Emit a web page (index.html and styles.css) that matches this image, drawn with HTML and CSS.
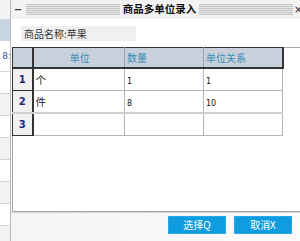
FILE: index.html
```html
<!DOCTYPE html>
<html>
<head>
<meta charset="utf-8">
<link rel="stylesheet" href="styles.css">
</head>
<body>
<div class="app">
  <div class="app-top"></div>
  <div class="app-band"></div>
  <div class="app-row app-first"><span class="app-num">8:</span></div>
  <div class="app-row"></div>
  <div class="app-row alt"></div>
  <div class="app-row"></div>
  <div class="app-row alt"></div>
  <div class="app-row"></div>
  <div class="app-row alt"></div>
  <div class="app-row"></div>
  <div class="app-row alt"></div>
</div>

<div class="dialog">
  <div class="titlebar">
    <span class="tb-min">−</span>
    <span class="stripes"></span>
    <span class="title">商品多单位录入</span>
    <span class="stripes"></span>
    <span class="tb-close">×</span>
  </div>
  <div class="content">
    <div class="name-box">商品名称:苹果</div>
    <div class="grid-box">
      <table class="grid">
        <colgroup>
          <col class="c-num"><col class="c-unit"><col class="c-qty"><col class="c-rel">
        </colgroup>
        <thead>
          <tr>
            <th class="corner"></th>
            <th class="h-center">单位</th>
            <th>数量</th>
            <th class="h-last">单位关系</th>
          </tr>
        </thead>
        <tbody>
          <tr>
            <td class="rn">1</td>
            <td class="cn">个</td>
            <td class="num">1</td>
            <td class="num">1</td>
          </tr>
          <tr class="r2">
            <td class="rn">2</td>
            <td class="cn">件</td>
            <td class="num">8</td>
            <td class="num">10</td>
          </tr>
          <tr>
            <td class="rn">3</td>
            <td class="cn"></td>
            <td class="num"></td>
            <td class="num"></td>
          </tr>
        </tbody>
      </table>
    </div>
  </div>
  <div class="footer">
    <button class="btn">选择Q</button>
    <button class="btn">取消X</button>
  </div>
</div>
</body>
</html>
```

FILE: styles.css
```css
html, body {
  margin: 0;
  padding: 0;
}
body {
  width: 300px;
  height: 241px;
  overflow: hidden;
  position: relative;
  background: #ffffff;
  font-family: "Noto Sans CJK SC", "Noto Sans", sans-serif;
  font-size: 10px;
  color: #222;
}

/* background application */
.app {
  width: 10px;
  height: 241px;
  background: #fafafa;
  border-right: 1px solid #d8d8d8;
}
.app-top {
  height: 19px;
  background: #f4f4f4;
}
.app-band {
  height: 22px;
  background: #c9d4e2;
}
.app-row {
  height: 21px;
  border-bottom: 1px solid #d4d4d4;
  background: #ffffff;
}
.app-row.alt {
  background: #f2f2f2;
}
.app-first {
  height: 30px;
  display: flex;
  align-items: center;
  justify-content: flex-end;
}
.app-num {
  color: #2f5f9f;
  font-family: "DejaVu Sans", sans-serif;
  font-size: 9px;
  line-height: 1;
  margin-right: -1px;
}

/* dialog window */
.dialog {
  position: absolute;
  left: 10px;
  top: 0;
  width: 296px;
  height: 241px;
  background: #ffffff;
  border-left: 1px solid #b8b8b8;
  display: flex;
  flex-direction: column;
  box-sizing: border-box;
}
.titlebar {
  height: 19px;
  flex: none;
  display: flex;
  align-items: center;
  background: #f3f3f3;
  padding: 0 0 0 2px;
  box-sizing: border-box;
}
.tb-min {
  width: 10px;
  font-size: 10px;
  font-weight: bold;
  color: #333;
  text-align: center;
  line-height: 1;
  font-family: "DejaVu Sans", sans-serif;
}
.stripes {
  flex: 1;
  height: 11px;
  margin: 0 3px;
  background: repeating-linear-gradient(to bottom, #c4c4c4 0, #c4c4c4 1px, #e6e6e6 1px, #e6e6e6 2px);
}
.title {
  font-weight: bold;
  font-size: 10.5px;
  color: #111;
  line-height: 1;
  white-space: nowrap;
}
.tb-close {
  width: 12px;
  font-size: 10px;
  color: #222;
  line-height: 1;
  text-align: left;
  font-family: "DejaVu Sans", sans-serif;
  margin-left: -2px;
}

.content {
  flex: 1;
  display: flex;
  flex-direction: column;
  padding: 7px 0 0 1px;
  min-height: 0;
}
.name-box {
  margin-left: 9px;
  width: 115px;
  height: 15px;
  background: #f0f0f0;
  line-height: 15px;
  padding-left: 3px;
  box-sizing: border-box;
  color: #333;
  font-size: 10px;
  white-space: nowrap;
}
.grid-box {
  margin-top: 6px;
  height: 165px;
  border: 1px solid #a8a8a8;
  border-right: none;
  box-sizing: border-box;
  background: #ffffff;
}
.grid {
  border-collapse: collapse;
  table-layout: fixed;
  width: 270px;
  margin: -1px 0 0 -1px;
}
.c-num { width: 20px; }
.c-unit { width: 92px; }
.c-qty { width: 79px; }
.c-rel { width: 79px; }

.grid th {
  height: 19px;
  background: #c8d0dc;
  color: #3b8db5;
  font-weight: normal;
  font-size: 10px;
  text-align: left;
  padding: 0 0 0 2px;
  border-top: 1px solid #333;
  border-bottom: 2px solid #333;
  border-left: 1px solid #9aa0a8;
  border-right: 1px solid #9aa0a8;
  white-space: nowrap;
}
.grid th.corner {
  border: 1px solid #333;
  border-bottom: 2px solid #333;
  border-right: 2px solid #333;
}
.grid th.h-center {
  text-align: center;
}
.grid th.h-last {
  border-right: 2px solid #333;
}

.grid td {
  height: 18px;
  border: 1px solid #b4b4b4;
  padding: 0 0 0 2px;
  white-space: nowrap;
  vertical-align: middle;
}
.grid tr.r2 td {
  border-bottom: 2px solid #cfcfcf;
}
.grid td.rn {
  background: #f0f0f0;
  border: 1px solid #333;
  border-right: 2px solid #333;
  text-align: center;
  padding: 0;
  color: #1b2a86;
  font-weight: bold;
  font-size: 10px;
  font-family: "DejaVu Sans", sans-serif;
}
.grid td.cn {
  font-size: 10.5px;
  color: #222;
}
.grid td.num {
  font-family: "DejaVu Sans", sans-serif;
  font-size: 8px;
  color: #111;
  padding-top: 3px;
  padding-left: 2px;
}

.footer {
  height: 29px;
  flex: none;
  border-top: 1px solid #d0d0d0;
  background: linear-gradient(to right, #f4f4f4, #fbfbfb);
  display: flex;
  align-items: flex-start;
  justify-content: flex-end;
  gap: 8px;
  padding: 3px 14px 0 0;
  box-sizing: border-box;
}
.btn {
  width: 58px;
  height: 18px;
  margin: 0;
  padding: 0;
  border: 1px solid #2aa8e8;
  background: #0f9de0;
  color: #ffffff;
  font-family: "Noto Sans CJK SC", "Noto Sans", sans-serif;
  font-size: 10px;
  line-height: 16px;
  text-align: center;
}
```
